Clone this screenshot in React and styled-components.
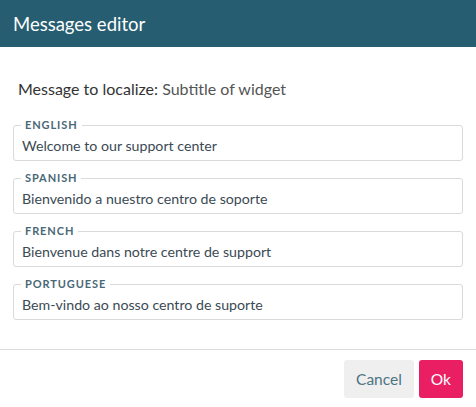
import styled, { createGlobalStyle } from 'styled-components'

const GlobalStyle = createGlobalStyle`
  body {
    margin: 0;
    background: #fff;
    font-family: Lato, "Noto Sans", sans-serif;
  }
`

const Dialog = styled.div`
  width: 476px;
  height: 407px;
  display: flex;
  flex-direction: column;
  background: #fff;
`

const Header = styled.header`
  height: 47px;
  display: flex;
  align-items: center;
  padding: 0 13px;
  box-sizing: border-box;
  background-color: #265d70;
  color: #fff;
  font-size: 18.5px;
`

const Body = styled.div`
  flex: 1;
  display: flex;
  flex-direction: column;
  gap: 11px;
  padding: 32px 13px 28px;
`

const Subject = styled.p`
  margin: 0 0 9px;
  padding-left: 5px;
  line-height: 20px;
  font-size: 16px;
  color: #555;

  strong {
    font-weight: 400;
    color: #333;
  }
`

const Field = styled.fieldset`
  margin: 0;
  padding: 0 8px 4px;
  border: 1px solid #dadada;
  border-radius: 3px;
  min-width: 0;
`

const Legend = styled.legend`
  margin-left: -1px;
  padding: 0 4px;
  line-height: 12px;
  font-size: 11px;
  font-weight: 700;
  letter-spacing: 0.9px;
  color: #4a6876;
`

const Input = styled.input`
  display: block;
  width: 100%;
  margin-top: 5px;
  padding: 0;
  border: none;
  outline: none;
  background: transparent;
  font-family: inherit;
  font-size: 14.2px;
  line-height: 20px;
  height: 20px;
  color: #3b4a54;
`

const Footer = styled.footer`
  display: flex;
  justify-content: flex-end;
  gap: 5px;
  padding: 10px 13px 9px;
  border-top: 1px solid #dddddd;
`

const Button = styled.button`
  height: 38px;
  padding: 0 12px;
  border: none;
  border-radius: 3px;
  font-family: inherit;
  font-size: 15.5px;
  cursor: pointer;
  background: ${(p) => (p.$primary ? '#ea1e63' : '#efefef')};
  color: ${(p) => (p.$primary ? '#fff' : '#4d7484')};
`

const translations = [
  { lang: 'ENGLISH', text: 'Welcome to our support center' },
  { lang: 'SPANISH', text: 'Bienvenido a nuestro centro de soporte' },
  { lang: 'FRENCH', text: 'Bienvenue dans notre centre de support' },
  { lang: 'PORTUGUESE', text: 'Bem-vindo ao nosso centro de suporte' },
]

const App = () => (
  <>
    <GlobalStyle />
    <Dialog>
      <Header>Messages editor</Header>
      <Body>
        <Subject>
          <strong>Message to localize:</strong> Subtitle of widget
        </Subject>
        {translations.map((t) => (
          <Field key={t.lang}>
            <Legend>{t.lang}</Legend>
            <Input defaultValue={t.text} />
          </Field>
        ))}
      </Body>
      <Footer>
        <Button>Cancel</Button>
        <Button $primary>Ok</Button>
      </Footer>
    </Dialog>
  </>
)

export default App
